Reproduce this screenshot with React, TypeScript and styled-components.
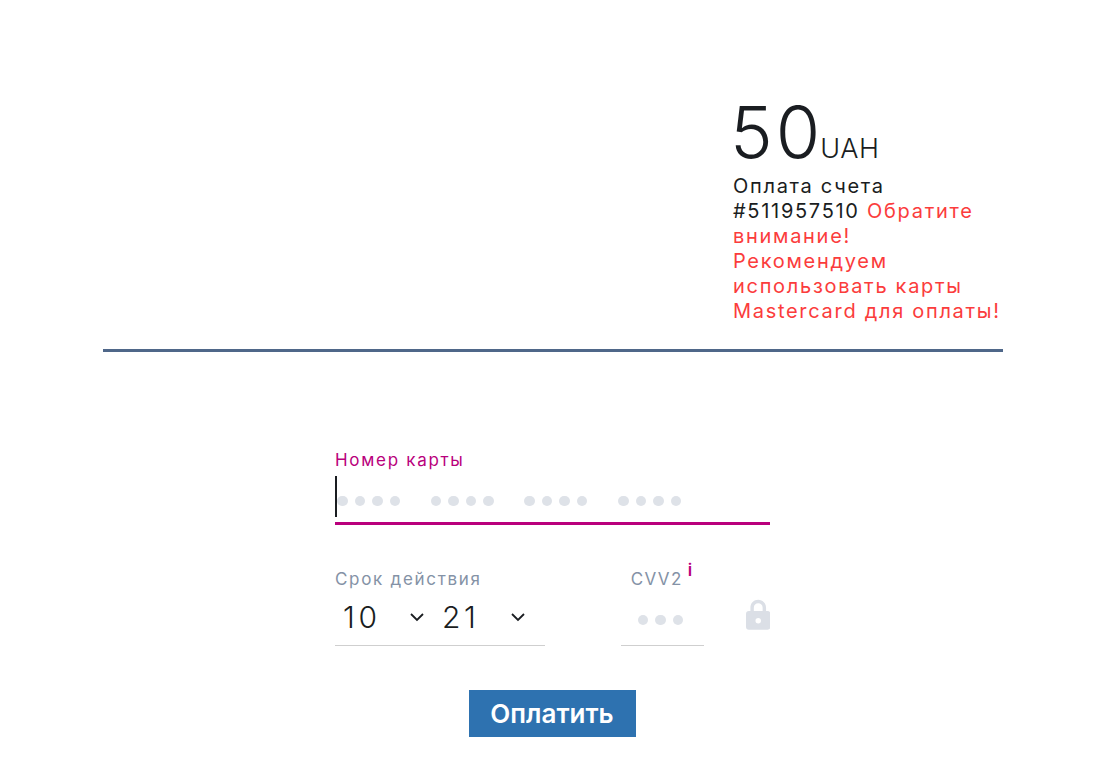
import React from "react";
import styled, { createGlobalStyle } from "styled-components";

const Global = createGlobalStyle`
  html, body { margin: 0; padding: 0; background: #fff; }
  body { font-family: Inter, Roboto, sans-serif; }
`;

const Page = styled.div`
  width: 900px;
  margin-left: 103px;
  display: flex;
  flex-direction: column;
`;

const Header = styled.header`
  display: flex;
  justify-content: flex-end;
  height: 349px;
  padding-top: 96px;
  box-sizing: border-box;
`;

const Divider = styled.div`
  height: 3px;
  background: #4f6789;
`;

const Summary = styled.div`
  width: 270px;
  color: #1a1d21;
`;

const Amount = styled.div`
  display: flex;
  align-items: baseline;
  height: 72px;
  line-height: 72px;
`;

const Value = styled.span`
  font-size: 72px;
  font-weight: 300;
  letter-spacing: 3px;
  margin-left: -3px;
`;

const Currency = styled.span`
  font-size: 27px;
  font-weight: 300;
  letter-spacing: 0.6px;
  margin-left: -3px;
`;

const Description = styled.p`
  margin: 6px 0 0;
  font-size: 20px;
  line-height: 25px;
  letter-spacing: 1.7px;
  font-weight: 400;
`;

const Warn = styled.span`
  color: #fb3c3c;
`;

const Form = styled.form`
  width: 435px;
  margin: 98px 0 0 232px;
  display: flex;
  flex-direction: column;
`;

const Label = styled.label<{ $active?: boolean }>`
  display: block;
  font-size: 17px;
  line-height: 20px;
  letter-spacing: 1.7px;
  color: ${(p) => (p.$active ? "#b9007c" : "#8492a6")};
`;

const CardField = styled.div`
  position: relative;
  height: 49px;
  margin-top: 6px;
  border-bottom: 3px solid #b9007c;
  display: flex;
  align-items: center;
  padding: 4px 0 0 2px;
  box-sizing: border-box;
  gap: 30.7px;
`;

const Caret = styled.span`
  position: absolute;
  left: 0;
  top: 0;
  width: 2px;
  height: 41px;
  background: #1a1d21;
`;

const DotGroup = styled.div`
  display: flex;
  gap: 7px;
`;

const Dot = styled.i`
  display: block;
  width: 10.5px;
  height: 10.5px;
  border-radius: 50%;
  background: #dee2e8;
`;

const Row = styled.div`
  display: flex;
  align-items: flex-start;
  margin-top: 44px;
`;

const Expiry = styled.div`
  width: 210px;
`;

const Selects = styled.div`
  display: flex;
  height: 57px;
  border-bottom: 1px solid #cfcfcf;
  box-sizing: border-box;
  padding-top: 11px;
`;

const Select = styled.div<{ $width: number; $inset: number }>`
  width: ${(p) => p.$width}px;
  padding: 0 ${(p) => p.$inset}px 0 8px;
  box-sizing: border-box;
  display: flex;
  align-items: center;
  justify-content: space-between;
  height: 34px;
  font-size: 30px;
  font-weight: 300;
  letter-spacing: 3.6px;
  color: #1a1d21;
`;

const Chevron = styled.svg`
  width: 16px;
  height: 10px;
  fill: none;
  stroke: #1a1d21;
  stroke-width: 1.8;
`;

const Cvv = styled.div`
  margin-left: 76px;
  width: 83px;
`;

const CvvLabel = styled(Label)`
  padding-left: 10px;
  letter-spacing: 1.4px;
  position: relative;
`;

const Info = styled.span`
  position: absolute;
  left: 67px;
  top: -8px;
  font-size: 17px;
  line-height: 18px;
  font-weight: 600;
  letter-spacing: 0;
  color: #b9007c;
`;

const CvvInput = styled.div`
  height: 57px;
  border-bottom: 1px solid #cfcfcf;
  box-sizing: border-box;
  display: flex;
  justify-content: center;
  align-items: center;
  gap: 7px;
  padding: 6px 3px 0 0;
`;

const Lock = styled.svg`
  width: 24.5px;
  height: 31px;
  margin: 30px 0 0 42px;
  fill: #dbdfe6;
`;

const Actions = styled.div`
  display: flex;
  justify-content: center;
  margin: 44px 0 0 -1px;
`;

const PayButton = styled.button`
  width: 167px;
  height: 47px;
  border: 0;
  border-radius: 0;
  padding: 0;
  background: #2e72b0;
  color: #fff;
  font-family: Inter, Roboto, sans-serif;
  font-size: 26px;
  font-weight: 600;
`;

const dots = (n: number) =>
  Array.from({ length: n }, (_, i) => <Dot key={i} />);

export default function App() {
  return (
    <Page>
      <Global />
      <Header>
        <Summary>
          <Amount>
            <Value>50</Value>
            <Currency>UAH</Currency>
          </Amount>
          <Description>
            Оплата счета #511957510{" "}
            <Warn>
              Обратите внимание!
              <br />
              Рекомендуем использовать карты Mastercard для оплаты!
            </Warn>
          </Description>
        </Summary>
      </Header>
      <Divider />
      <Form>
        <Label $active>Номер карты</Label>
        <CardField>
          <Caret />
          {[0, 1, 2, 3].map((g) => (
            <DotGroup key={g}>{dots(4)}</DotGroup>
          ))}
        </CardField>
        <Row>
          <Expiry>
            <Label>Срок действия</Label>
            <Selects>
              <Select $width={99} $inset={9}>
                10
                <Chevron viewBox="0 0 16 10"><path d="M2 2l6 6 6-6" /></Chevron>
              </Select>
              <Select $width={102} $inset={10}>
                21
                <Chevron viewBox="0 0 16 10"><path d="M2 2l6 6 6-6" /></Chevron>
              </Select>
            </Selects>
          </Expiry>
          <Cvv>
            <CvvLabel>
              CVV2
              <Info>i</Info>
            </CvvLabel>
            <CvvInput>{dots(3)}</CvvInput>
          </Cvv>
          <Lock viewBox="0 0 25 31">
            <path
              fillRule="evenodd"
              d="M4.500 12V8.500C4.500 3.800 8 .5 12.500 .5S20.500 3.800 20.500 8.500V12h1.500A3 3 0 0 1 25 15V28A3 3 0 0 1 22 31H3A3 3 0 0 1 0 28V15A3 3 0 0 1 3 12zM8 12h9V8.500C17 5.800 15 4 12.500 4S8 5.800 8 8.500zM12.500 19a2.800 2.800 0 1 0 0 5.600 2.800 2.800 0 0 0 0-5.600z"
            />
          </Lock>
        </Row>
        <Actions>
          <PayButton type="button">Оплатить</PayButton>
        </Actions>
      </Form>
    </Page>
  );
}
